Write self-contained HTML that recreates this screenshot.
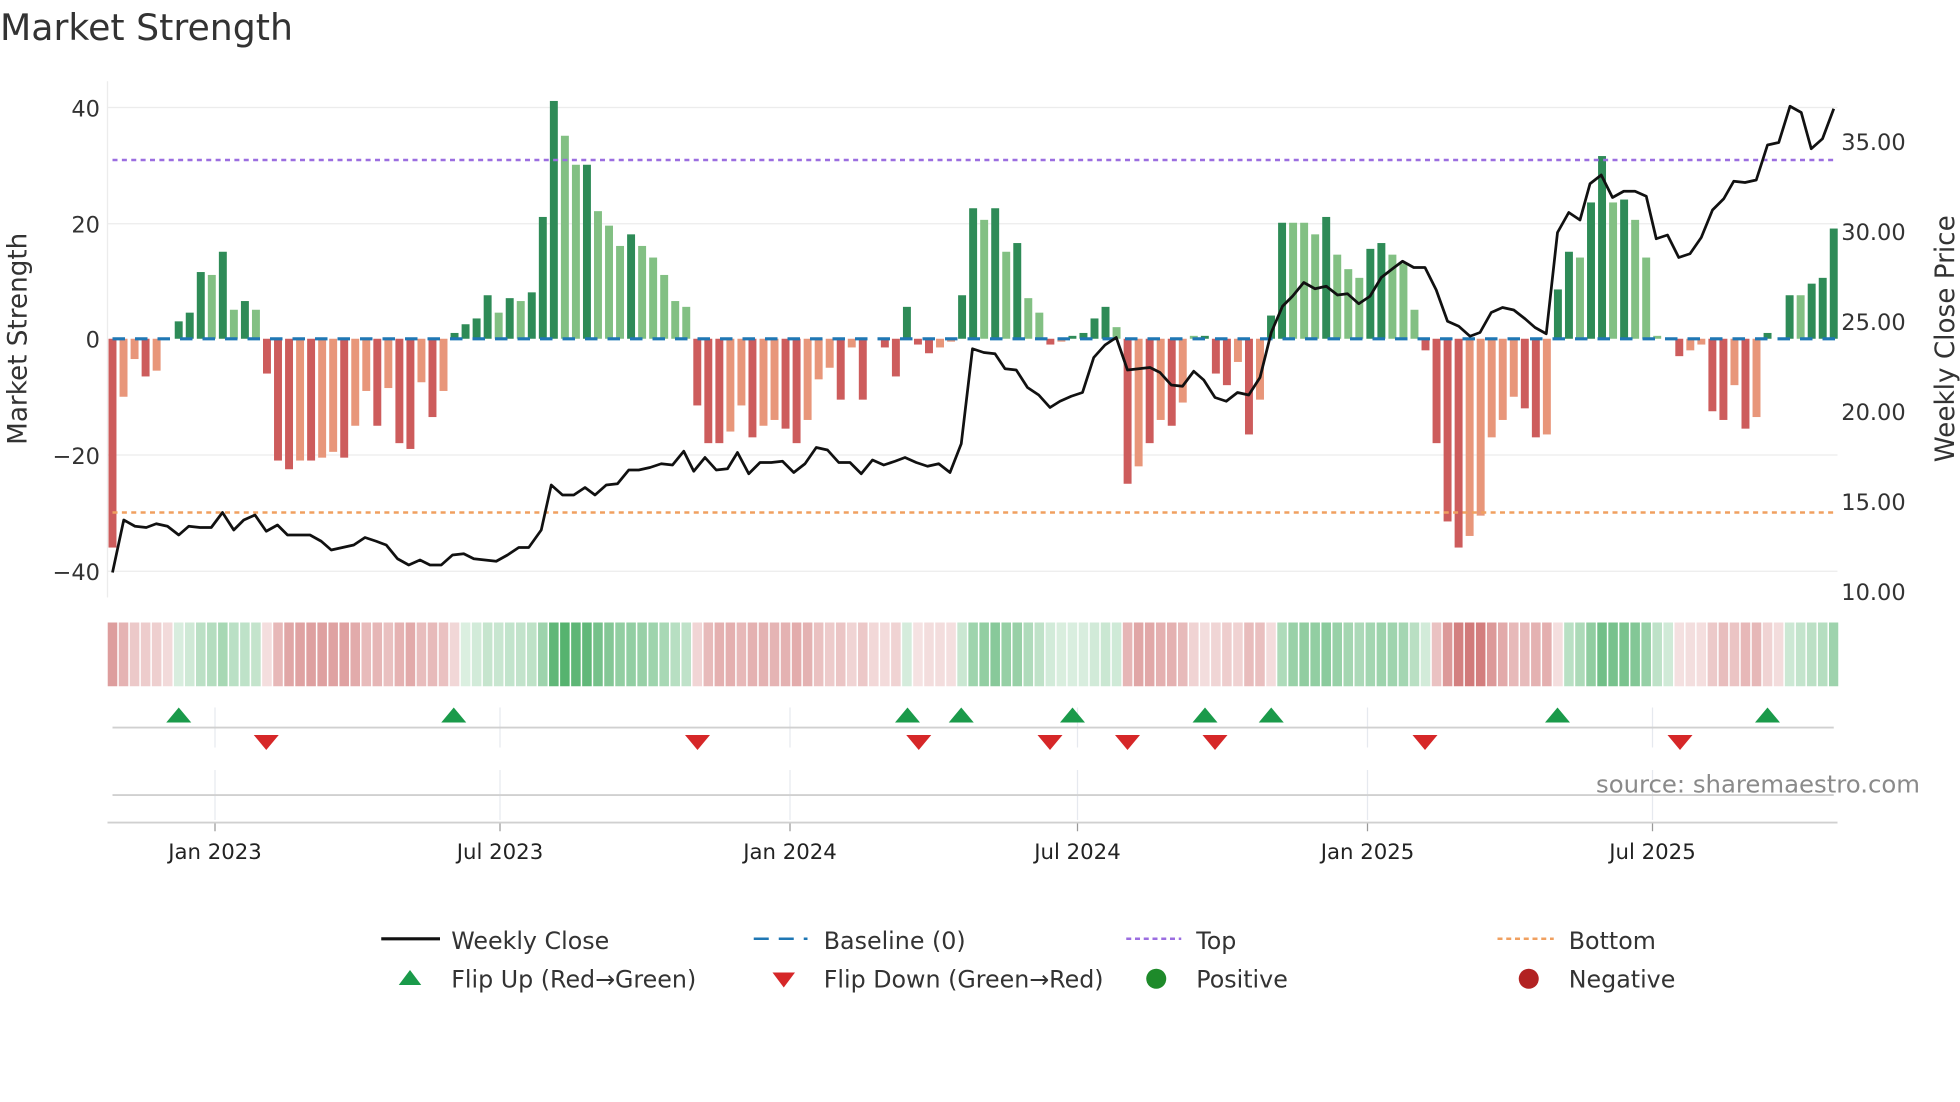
<!DOCTYPE html>
<html><head><meta charset="utf-8"><style>
html,body{margin:0;padding:0;background:#fff;width:1960px;height:1102px;overflow:hidden}
svg{display:block;font-family:"DejaVu Sans","Liberation Sans",sans-serif}
</style></head><body>
<svg id="s" width="1960" height="1102" viewBox="0 0 1568 881.6" xmlns="http://www.w3.org/2000/svg">
<text x="0" y="32" font-size="29" fill="#333">Market Strength</text>
<g stroke="#ececec" stroke-width="1">
<line x1="86" y1="86" x2="1470" y2="86"/><line x1="86" y1="179" x2="1470" y2="179"/>
<line x1="86" y1="364" x2="1470" y2="364"/><line x1="86" y1="457" x2="1470" y2="457"/>
<line x1="86" y1="65" x2="86" y2="478"/>
</g>
<g font-size="18" fill="#333" text-anchor="end">
<text x="80" y="93">40</text><text x="80" y="186">20</text><text x="80" y="278">0</text>
<text x="80" y="371">−20</text><text x="80" y="464">−40</text>
</g>
<g font-size="18" fill="#333">
<text x="1473" y="120">35.00</text><text x="1473" y="192">30.00</text><text x="1473" y="264">25.00</text>
<text x="1473" y="336">20.00</text><text x="1473" y="408">15.00</text><text x="1473" y="480">10.00</text>
</g>
<text transform="translate(21,271) rotate(-90)" font-size="21" fill="#333" text-anchor="middle">Market Strength</text>
<text transform="translate(1563,271) rotate(-90)" font-size="21" fill="#333" text-anchor="middle">Weekly Close Price</text>
<g id="bars"></g>
<line x1="90" y1="271" x2="1470" y2="271" stroke="#1f77b4" stroke-width="2.5" stroke-dasharray="10,8"/>
<line x1="90" y1="128" x2="1470" y2="128" stroke="#9b6ee0" stroke-width="2" stroke-dasharray="4,3.5"/>
<line x1="90" y1="410" x2="1470" y2="410" stroke="#f0a060" stroke-width="2" stroke-dasharray="4,3.5"/>
<polyline id="pl" fill="none" stroke="#111" stroke-width="2.2" stroke-linejoin="round"/>
<g id="strip"></g>
<g stroke="#e6e9ef" stroke-width="1" id="vg"></g>
<line x1="90" y1="582" x2="1467" y2="582" stroke="#d0d0d0" stroke-width="1.5"/>
<line x1="90" y1="636" x2="1467" y2="636" stroke="#d0d0d0" stroke-width="1.5"/>
<line x1="86" y1="658" x2="1470" y2="658" stroke="#d0d0d0" stroke-width="1.5"/>
<g id="tri"></g>
<text x="1536" y="634" font-size="19.5" fill="#8a8a8a" text-anchor="end">source: sharemaestro.com</text>
<g font-size="17" fill="#222" text-anchor="middle">
<text x="172" y="687">Jan 2023</text><text x="400" y="687">Jul 2023</text><text x="632" y="687">Jan 2024</text>
<text x="862" y="687">Jul 2024</text><text x="1094" y="687">Jan 2025</text><text x="1322" y="687">Jul 2025</text>
</g>
<g font-size="19" fill="#333">
<line x1="305" y1="751" x2="352" y2="751" stroke="#111" stroke-width="2.5"/><text x="361" y="759">Weekly Close</text>
<line x1="603" y1="751" x2="646" y2="751" stroke="#1f77b4" stroke-width="2" stroke-dasharray="12,8"/><text x="659" y="759">Baseline (0)</text>
<line x1="901" y1="751" x2="945" y2="751" stroke="#9b6ee0" stroke-width="2" stroke-dasharray="4,3"/><text x="957" y="759">Top</text>
<line x1="1198" y1="751" x2="1243" y2="751" stroke="#f0a060" stroke-width="2" stroke-dasharray="4,3"/><text x="1255" y="759">Bottom</text>
<polygon points="319,788 337,788 328,776" fill="#1a9a4a"/><text x="361" y="790">Flip Up (Red→Green)</text>
<polygon points="618,778 636,778 627,790" fill="#d62728"/><text x="659" y="790">Flip Down (Green→Red)</text>
<circle cx="925" cy="783" r="8" fill="#1e8a2a"/><text x="957" y="790">Positive</text>
<circle cx="1223" cy="783" r="8" fill="#b22222"/><text x="1255" y="790">Negative</text>
</g>
</svg>
<script>
var NS="http://www.w3.org/2000/svg";
function el(t,a,p){var e=document.createElementNS(NS,t);for(var k in a)e.setAttribute(k,a[k]);p.appendChild(e);return e;}
var V=[[-36,1],[-10,0],[-3.5,0],[-6.5,1],[-5.5,0],[0,0],[3,1],[4.5,1],[11.5,1],[11,0],[15,1],[5,0],[6.5,1],[5,0],
[-6,1],[-21,1],[-22.5,1],[-21,0],[-21,1],[-20.5,0],[-19.5,0],[-20.5,1],[-15,0],[-9,0],[-15,1],[-8.5,0],[-18,1],[-19,1],[-7.5,0],[-13.5,1],[-9,0],
[1,1],[2.5,1],[3.5,1],[7.5,1],[4.5,0],[7,1],[6.5,0],[8,1],[21,1],[41,1],[35,0],[30,0],[30,1],[22,0],[19.5,0],[16,0],[18,1],[16,0],[14,0],[11,0],[6.5,0],[5.5,0],
[-11.5,1],[-18,1],[-18,1],[-16,0],[-11.5,0],[-17,1],[-15,0],[-14,0],[-15.5,1],[-18,1],[-14,0],[-7,0],[-5,0],[-10.5,1],[-1.5,0],[-10.5,1],[0,0],[-1.5,1],[-6.5,1],[5.5,1],[-1,1],[-2.5,1],[-1.5,0],[-0.5,0],
[7.5,1],[22.5,1],[20.5,0],[22.5,1],[15,0],[16.5,1],[7,0],[4.5,0],[-1,1],[-0.5,0],[0.5,1],[1,1],[3.5,1],[5.5,1],[2,0],
[-25,1],[-22,0],[-18,1],[-14,0],[-15,1],[-11,0],[0.5,0],[0.5,1],[-6,1],[-8,1],[-4,0],[-16.5,1],[-10.5,0],
[4,1],[20,1],[20,0],[20,0],[18,0],[21,1],[14.5,0],[12,0],[10.5,0],[15.5,1],[16.5,1],[14.5,0],[13,0],[5,0],
[-2,1],[-18,1],[-31.5,1],[-36,1],[-34,0],[-30.5,0],[-17,0],[-14,0],[-10,0],[-12,1],[-17,1],[-16.5,0],
[8.5,1],[15,1],[14,0],[23.5,1],[31.5,1],[23.5,0],[24,1],[20.5,0],[14,0],[0.5,0],[0,0],
[-3,1],[-2,0],[-1,0],[-12.5,1],[-14,1],[-8,0],[-15.5,1],[-13.5,0],[1,1],[0,0],[7.5,1],[7.5,0],[9.5,1],[10.5,1],[19,1]];
var n=V.length,x0=90,x1=1467,p=(x1-x0)/(n-1),bw=p*0.72;
var B=document.getElementById("bars"),S=document.getElementById("strip");
function mix(c,t){return "rgb("+c.map(function(v){return Math.round(255+(v-255)*t)}).join(",")+")";}
var sm=0;
for(var i=0;i<n;i++){
 var v=V[i][0],d=V[i][1],x=x0+i*p;
 if(v!=0){var c=v>0?(d?"#2e8b57":"#82c083"):(d?"#cd5c5c":"#e8967a");
  var y=271-v*4.64;el("rect",{x:x-bw/2,y:Math.min(y,271),width:bw,height:Math.abs(v*4.64),fill:c},B);}
 sm=sm*0.4+v*0.6;
 var t=Math.min(1,Math.abs(sm)/36)*0.72+0.18;
 var cc=sm>=0?mix([55,165,85],t):mix([200,95,95],t);
 el("rect",{x:x-p/2+0.6,y:498,width:(i==n-1?p/2+3:p-1.2),height:51,fill:cc},S);
}
var P=[[90,458],[99,416],[108,421],[117,422],[125,419],[134,421],[143,428],[151,421],[160,422],[169,422],[178,410],[187,424],[195,416],[204,412],[213,425],[222,420],[230,428],[239,428],[248,428],[257,433],[265,440],[274,438],[283,436],[292,430],[301,433],[309,436],[318,447],[327,452],[336,448],[344,452],[353,452],[362,444],[371,443],[379,447],[388,448],[397,449],[406,444],[415,438],[423,438],[433,424],[441,388],[450,396],[459,396],[468,390],[476,396],[485,388],[494,387],[503,376],[511,376],[520,374],[529,371],[538,372],[547,361],[555,377],[564,366],[573,376],[582,375],[590,362],[599,379],[608,370],[617,370],[626,369],[635,378],[644,371],[653,358],[662,360],[671,370],[680,370],[689,379],[698,368],[707,372],[716,369],[724,366],[733,370],[742,373],[751,371],[760,378],[769,355],[778,279],[787,282],[796,283],[804,295],[813,296],[822,310],[831,316],[840,326],[848,321],[857,317],[866,314],[875,286],[884,276],[893,270],[902,296],[911,295],[920,294],[928,298],[937,308],[946,309],[955,297],[963,304],[972,318],[981,321],[990,314],[999,316],[1008,302],[1017,266],[1026,245],[1034,237],[1043,226],[1052,231],[1061,229],[1070,236],[1078,235],[1087,243],[1096,237],[1105,222],[1114,215],[1122,209],[1131,214],[1140,214],[1149,232],[1158,257],[1167,261],[1176,269],[1184,266],[1193,250],[1202,246],[1211,248],[1220,255],[1228,262],[1237,267],[1246,186],[1255,170],[1264,176],[1272,147],[1281,140],[1290,158],[1299,153],[1308,153],[1317,157],[1325,191],[1334,188],[1343,206],[1352,203],[1361,190],[1370,168],[1379,159],[1387,145],[1396,146],[1405,144],[1414,116],[1423,114],[1432,85],[1441,90],[1449,119],[1458,111],[1467,87]];
document.getElementById("pl").setAttribute("points",P.map(function(q){return q.join(",")}).join(" "));
var G=document.getElementById("vg");
[172,400,632,862,1094,1322].forEach(function(x){el("line",{x1:x,y1:566,x2:x,y2:598},G);el("line",{x1:x,y1:616,x2:x,y2:656},G);el("line",{x1:x,y1:658,x2:x,y2:665,stroke:"#999"},G);});
var T=document.getElementById("tri");
[143,363,726,769,858,964,1017,1246,1414].forEach(function(x){el("polygon",{points:(x-10)+",578 "+(x+10)+",578 "+x+",566",fill:"#1a9a4a"},T);});
[213,558,735,840,902,972,1140,1344].forEach(function(x){el("polygon",{points:(x-10)+",588 "+(x+10)+",588 "+x+",600",fill:"#d62728"},T);});
</script>
</body></html>
